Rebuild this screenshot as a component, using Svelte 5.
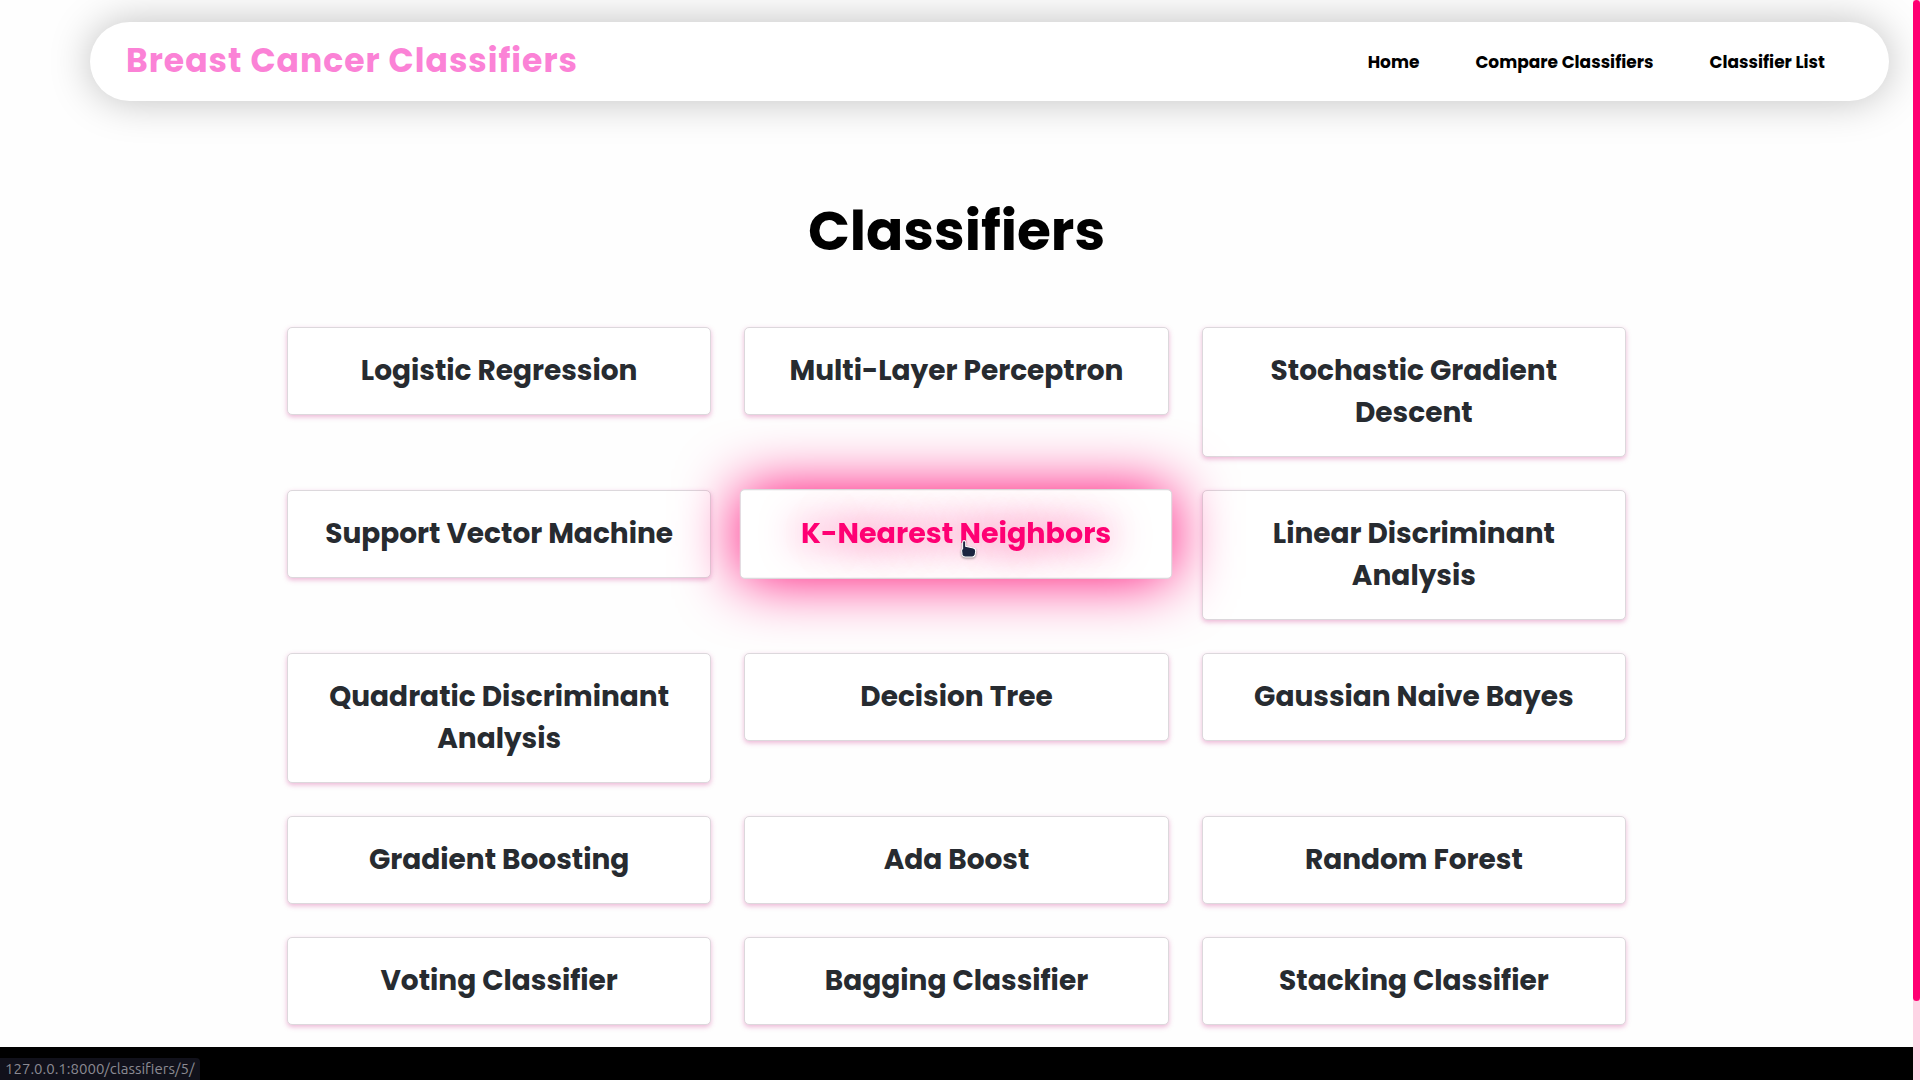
<script>
  const links = [
    { label: 'Home', href: '#home' },
    { label: 'Compare Classifiers', href: '#compare' },
    { label: 'Classifier List', href: '#classifiers' }
  ];

  const classifiers = [
    'Logistic Regression',
    'Multi-Layer Perceptron',
    'Stochastic Gradient Descent',
    'Support Vector Machine',
    'K-Nearest Neighbors',
    'Linear Discriminant Analysis',
    'Quadratic Discriminant Analysis',
    'Decision Tree',
    'Gaussian Naive Bayes',
    'Gradient Boosting',
    'Ada Boost',
    'Random Forest',
    'Voting Classifier',
    'Bagging Classifier',
    'Stacking Classifier'
  ];

  const hovered = 'K-Nearest Neighbors';
</script>

<div class="shell">
  <div class="page">
    <header>
      <a class="brand" href="#home">Breast Cancer Classifiers</a>
      <nav>
        {#each links as link}
          <a href={link.href}>{link.label}</a>
        {/each}
      </nav>
    </header>

    <main>
      <h1>Classifiers</h1>
      <div class="grid">
        {#each classifiers as name, i}
          <a class="card" class:active={name === hovered} href={`#classifiers/${i + 1}`}>
            {name}
            {#if name === hovered}
              <svg class="pointer" viewBox="0 0 18 20" aria-hidden="true">
                <path
                  d="M2.500 2Q2.500 .5 4 .5Q5.500 .5 5.500 2V6L13 7.800Q15.500 8.500 15.300 11L14.800 14Q14.300 16.500 12 16.500H5Q2.600 16.500 2 14.500L1.500 10.500Q1.500 9 2.500 8.500Z"
                />
              </svg>
            {/if}
          </a>
        {/each}
      </div>
    </main>

    <footer></footer>
  </div>
  <div class="track" aria-hidden="true"><div class="thumb"></div></div>
  <div class="status">127.0.0.1:8000/classifiers/5/</div>
</div>

<style>
  :global(body) {
    margin: 0;
    background: #fefefe;
  }

  .shell {
    display: flex;
    min-height: 100vh;
    font-family: Poppins, Inter, 'Open Sans', sans-serif;
    font-feature-settings: 'cv11';
    font-weight: 700;
    color: #000;
  }

  .page {
    flex: 1;
    min-width: 0;
    display: flex;
    flex-direction: column;
  }

  a {
    color: inherit;
    text-decoration: none;
  }

  header {
    display: flex;
    align-items: center;
    justify-content: space-between;
    box-sizing: border-box;
    min-height: 79px;
    margin: 22px 24px 0 90px;
    padding: 0 64px 0 36px;
    border-radius: 40px;
    background: #fff;
    box-shadow: 0 0 40px rgba(0, 0, 0, 0.25);
  }

  .brand {
    padding-bottom: 1px;
    font-size: 33px;
    line-height: 40px;
    letter-spacing: 1px;
    color: #fb82d6;
  }

  nav {
    display: flex;
    gap: 56px;
    font-size: 17px;
    line-height: 24px;
  }

  main {
    display: flex;
    flex-direction: column;
    align-items: center;
    padding: 88px 0 22px;
  }

  h1 {
    margin: 0 0 54px;
    font-size: 55px;
    line-height: 84px;
  }

  .grid {
    display: grid;
    grid-template-columns: repeat(3, 1fr);
    align-items: start;
    gap: 33px;
    width: 70%;
  }

  .card {
    padding: 22px 32px;
    border: 1px solid #dcd8dc;
    border-radius: 5px;
    background: #fff;
    box-shadow: 0 2px 5px rgba(204, 51, 140, 0.35);
    color: #272b30;
    font-size: 28px;
    line-height: 42px;
    text-align: center;
  }

  .active {
    position: relative;
    z-index: 1;
    transform: scale(1.02);
    color: #ff0073;
    box-shadow: 0 0 60px #ff0073;
    text-shadow: 0 0 40px #ff0073;
  }

  .pointer {
    position: absolute;
    left: 51%;
    top: 49px;
    width: 18px;
    height: 20px;
    filter: drop-shadow(0 1px 1px rgba(0, 0, 0, 0.4));
  }

  .pointer path {
    fill: #1b2440;
    stroke: #fff;
    stroke-width: 1;
  }

  footer {
    flex: 1;
    min-height: 33px;
    background: #000;
  }

  .track {
    width: 7px;
    background: #fdd3e4;
  }

  .thumb {
    height: 1001px;
    border-radius: 4px;
    background: #ff0073;
  }

  .status {
    position: fixed;
    left: 0;
    bottom: 0;
    padding: 0 6px 0 5px;
    border-top-right-radius: 4px;
    background: #11111b;
    color: #8b8a92;
    font: 400 15px/22px Ubuntu, 'Noto Sans', sans-serif;
  }
</style>
